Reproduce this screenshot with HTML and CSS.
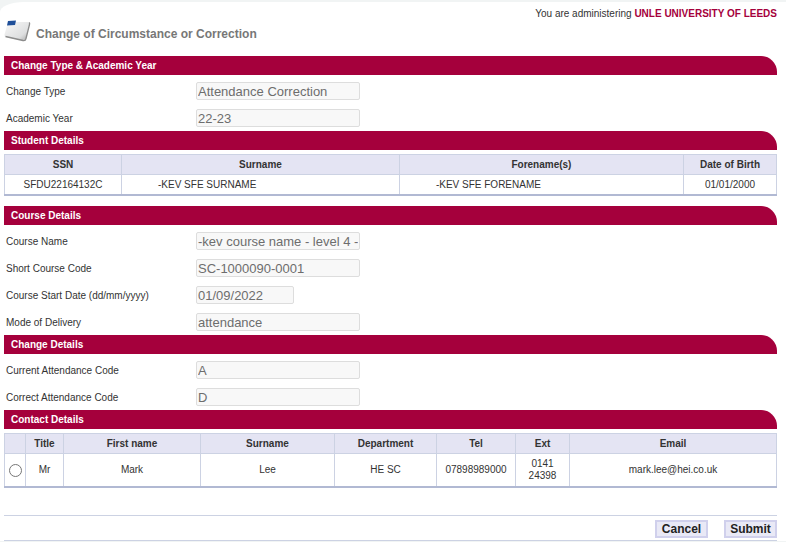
FILE: index.html
```html
<!DOCTYPE html>
<html lang="en">
<head>
  <meta charset="UTF-8">
  <title>Change of Circumstance or Correction</title>
  <link rel="stylesheet" href="styles.css">
</head>
<body>
  <form class="page">
    <p class="admin">You are administering <strong>UNLE UNIVERSITY OF LEEDS</strong></p>

    <div class="title">
      <svg width="27" height="22" viewBox="0 0 27 22" aria-hidden="true">
        <defs>
          <linearGradient id="folder" x1="0" y1="0" x2="1" y2="1">
            <stop offset="0" stop-color="#f8f8f8"/>
            <stop offset="0.7" stop-color="#dedfe0"/>
            <stop offset="1" stop-color="#a6a6a6"/>
          </linearGradient>
        </defs>
        <path d="M4 2 L24 2 Q26 2 25.500 4 L22 18.500 Q21.500 21 19 20.500 L2 17 Q0 16.500 0.500 14.500 Z" fill="url(#folder)"/>
        <path d="M25 2.500 Q26 3 25.500 4.500 L22 18.500 Q21.500 21 19 20.500 L1.500 16.500" fill="none" stroke="#8b8b8b" stroke-width="1.300"/>
        <path d="M4 1 L12 0.500 L11 5 L3 5.500 Z" fill="#1f4f99"/>
      </svg>
      <h1>Change of Circumstance or Correction</h1>
    </div>

    <h2>Change Type &amp; Academic Year</h2>
    <div class="fields">
      <div class="row">
        <label for="changeType">Change Type</label>
        <input type="text" id="changeType" value="Attendance Correction" disabled>
      </div>
      <div class="row">
        <label for="year">Academic Year</label>
        <input type="text" id="year" value="22-23" disabled>
      </div>
    </div>

    <h2>Student Details</h2>
    <table class="student">
      <colgroup>
        <col class="ssn"><col class="surname"><col class="forename"><col class="dob">
      </colgroup>
      <thead>
        <tr><th>SSN</th><th>Surname</th><th>Forename(s)</th><th>Date of Birth</th></tr>
      </thead>
      <tbody>
        <tr>
          <td>SFDU22164132C</td>
          <td class="name">-KEV SFE SURNAME</td>
          <td class="name">-KEV SFE FORENAME</td>
          <td>01/01/2000</td>
        </tr>
      </tbody>
    </table>

    <h2>Course Details</h2>
    <div class="fields">
      <div class="row">
        <label for="courseName">Course Name</label>
        <input type="text" id="courseName" value="-kev course name - level 4 -" disabled>
      </div>
      <div class="row">
        <label for="courseCode">Short Course Code</label>
        <input type="text" id="courseCode" value="SC-1000090-0001" disabled>
      </div>
      <div class="row">
        <label for="startDate">Course Start Date (dd/mm/yyyy)</label>
        <input type="text" id="startDate" class="date" value="01/09/2022" disabled>
      </div>
      <div class="row">
        <label for="mode">Mode of Delivery</label>
        <input type="text" id="mode" value="attendance" disabled>
      </div>
    </div>

    <h2>Change Details</h2>
    <div class="fields">
      <div class="row">
        <label for="currentCode">Current Attendance Code</label>
        <input type="text" id="currentCode" value="A" disabled>
      </div>
      <div class="row">
        <label for="correctCode">Correct Attendance Code</label>
        <input type="text" id="correctCode" value="D" disabled>
      </div>
    </div>

    <h2>Contact Details</h2>
    <table class="contact">
      <colgroup>
        <col class="pick"><col class="salutation"><col class="first"><col class="last">
        <col class="dept"><col class="tel"><col class="ext"><col class="email">
      </colgroup>
      <thead>
        <tr>
          <th></th><th>Title</th><th>First name</th><th>Surname</th>
          <th>Department</th><th>Tel</th><th>Ext</th><th>Email</th>
        </tr>
      </thead>
      <tbody>
        <tr>
          <td><input type="radio" name="contact" aria-label="Mr Mark Lee"></td>
          <td>Mr</td>
          <td>Mark</td>
          <td>Lee</td>
          <td>HE SC</td>
          <td>07898989000</td>
          <td>0141 24398</td>
          <td>mark.lee@hei.co.uk</td>
        </tr>
      </tbody>
    </table>

    <div class="actions">
      <button type="button">Cancel</button>
      <button type="submit">Submit</button>
    </div>
  </form>
</body>
</html>
```
FILE: styles.css
```css
body {
  margin: 0;
  background: #f1f4f4;
  color: #333;
  font-family: Arial, "Liberation Sans", sans-serif;
  font-size: 10px;
}
.page {
  margin-top: 2px;
  padding: 5px 9px 0 4px;
  background: #fff;
  border-top-left-radius: 24px 10px;
}
.admin {
  margin: 0;
  line-height: 14px;
  text-align: right;
}
.admin strong {
  color: #a5003c;
}
.title {
  display: flex;
  align-items: flex-end;
  gap: 5px;
  height: 21px;
  margin-bottom: 14px;
}
h1 {
  margin: 0;
  color: #777;
  font-size: 12px;
  line-height: 16px;
}
h2 {
  margin: 0;
  padding-left: 7px;
  background: #a5003c;
  border-top-right-radius: 16px;
  color: #fff;
  font-size: 10px;
  line-height: 19px;
}
.fields {
  display: flex;
  flex-direction: column;
  gap: 1px;
  padding: 3px 0 0 2px;
}
.row {
  display: flex;
  align-items: center;
  height: 26px;
}
.row label {
  width: 190px;
}
.row input {
  box-sizing: border-box;
  width: 164px;
  height: 18px;
  padding: 0 1px;
  background: #f8f8f8;
  border: 1px solid #ddd;
  border-radius: 2px;
  color: #6d6d6d;
  font-family: inherit;
  font-size: 13px;
}
.row input.date {
  width: 98px;
}
table {
  width: 100%;
  margin-top: 4px;
  table-layout: fixed;
  border-collapse: collapse;
  text-align: center;
  line-height: 12px;
}
th, td {
  padding: 0 4px;
  border: 1px solid #ccd2e3;
}
td {
  border-bottom: 2px solid #b1b9d3;
}
th {
  height: 19px;
  background: #e4e4f3;
}
.student {
  margin-bottom: 10px;
}
.student td {
  height: 19px;
}
.student .name {
  padding-left: 36px;
  text-align: left;
}
.ssn { width: 117px; }
.surname { width: 36%; }
.dob { width: 93px; }
.contact td {
  height: 32px;
}
.contact td:first-child {
  padding: 0;
}
.contact input {
  display: block;
  width: 13px;
  height: 13px;
  margin: 0 auto;
}
.pick { width: 21px; }
.salutation { width: 38px; }
.first { width: 137px; }
.last { width: 134px; }
.dept { width: 102px; }
.tel { width: 79px; }
.ext { width: 54px; }
.actions {
  display: flex;
  justify-content: flex-end;
  gap: 16px;
  margin-top: 27px;
  padding: 4px 0 2px;
  border-top: 1px solid #ccd2e3;
  border-bottom: 1px solid #ccd2e3;
}
button {
  min-width: 53px;
  height: 18px;
  padding: 0 4px;
  background: #e9e9f6;
  border: 2px solid #d0d0ec;
  color: #222;
  font-family: inherit;
  font-size: 12px;
  font-weight: bold;
  line-height: 14px;
}
```
